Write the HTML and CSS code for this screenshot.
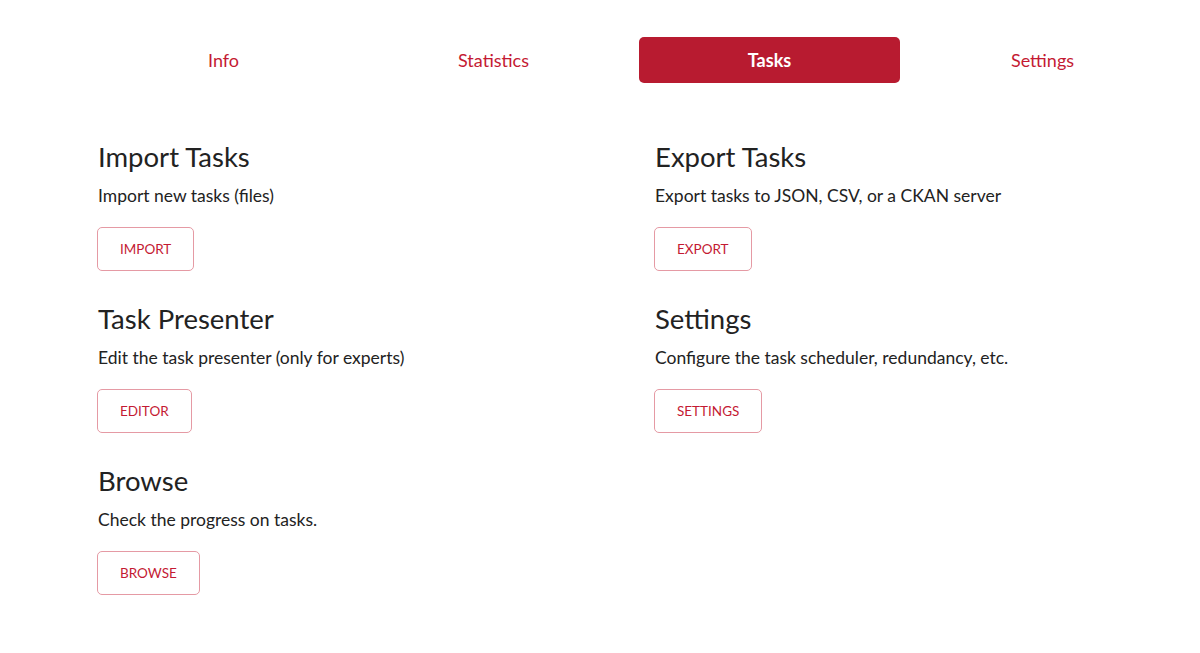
FILE: index.html
```html
<!DOCTYPE html>
<html lang="en">
<head>
<meta charset="utf-8">
<title>Tasks</title>
<link rel="stylesheet" href="styles.css">
</head>
<body>
<div class="page">
  <nav class="tabs">
    <a class="tab" href="#">Info</a>
    <a class="tab tab-shift" href="#">Statistics</a>
    <a class="tab active" href="#">Tasks</a>
    <a class="tab" href="#">Settings</a>
  </nav>
  <main class="grid">
    <section class="card">
      <h2 class="title">Import Tasks</h2>
      <p class="desc">Import new tasks (files)</p>
      <a class="btn" href="#">Import</a>
    </section>
    <section class="card">
      <h2 class="title">Export Tasks</h2>
      <p class="desc">Export tasks to JSON, CSV, or a CKAN server</p>
      <a class="btn" href="#">Export</a>
    </section>
    <section class="card">
      <h2 class="title">Task Presenter</h2>
      <p class="desc">Edit the task presenter (only for experts)</p>
      <a class="btn" href="#">Editor</a>
    </section>
    <section class="card">
      <h2 class="title">Settings</h2>
      <p class="desc">Configure the task scheduler, redundancy, etc.</p>
      <a class="btn" href="#">Settings</a>
    </section>
    <section class="card">
      <h2 class="title">Browse</h2>
      <p class="desc">Check the progress on tasks.</p>
      <a class="btn" href="#">Browse</a>
    </section>
  </main>
</div>
</body>
</html>
```

FILE: styles.css
```css
html, body {
  margin: 0;
  padding: 0;
  background: #ffffff;
}

body {
  font-family: Lato, "Noto Sans", sans-serif;
  color: #222222;
}

.page {
  width: 1080px;
  margin: 0 0 0 93px;
  padding: 37px 0 0 0;
  box-sizing: border-box;
}

.tabs {
  display: grid;
  grid-template-columns: repeat(4, 1fr);
  column-gap: 12px;
}

.tab {
  display: flex;
  align-items: center;
  justify-content: center;
  height: 46px;
  border-radius: 5px;
  font-size: 18px;
  color: #c41a33;
  text-decoration: none;
}

.tab-shift {
  padding-right: 6px;
}

.tab.active {
  background: #b81b30;
  color: #ffffff;
  font-weight: 700;
}

.grid {
  display: grid;
  grid-template-columns: 513px 513px;
  column-gap: 44px;
  padding: 57px 0 0 5px;
}

.card {
  display: flex;
  flex-direction: column;
  align-items: flex-start;
  height: 162px;
}

.title {
  margin: 0;
  font-size: 27.5px;
  line-height: 34px;
  font-weight: 400;
  color: #222222;
}

.desc {
  margin: 8px 0 0 0;
  font-size: 17.5px;
  line-height: 27px;
  color: #222222;
}

.btn {
  margin-top: 18px;
  margin-left: -1px;
  box-sizing: border-box;
  height: 44px;
  padding: 0 22px;
  display: inline-flex;
  align-items: center;
  border: 1px solid #e59aa4;
  border-radius: 5px;
  font-size: 13.5px;
  text-transform: uppercase;
  color: #c41a33;
  text-decoration: none;
}
```
